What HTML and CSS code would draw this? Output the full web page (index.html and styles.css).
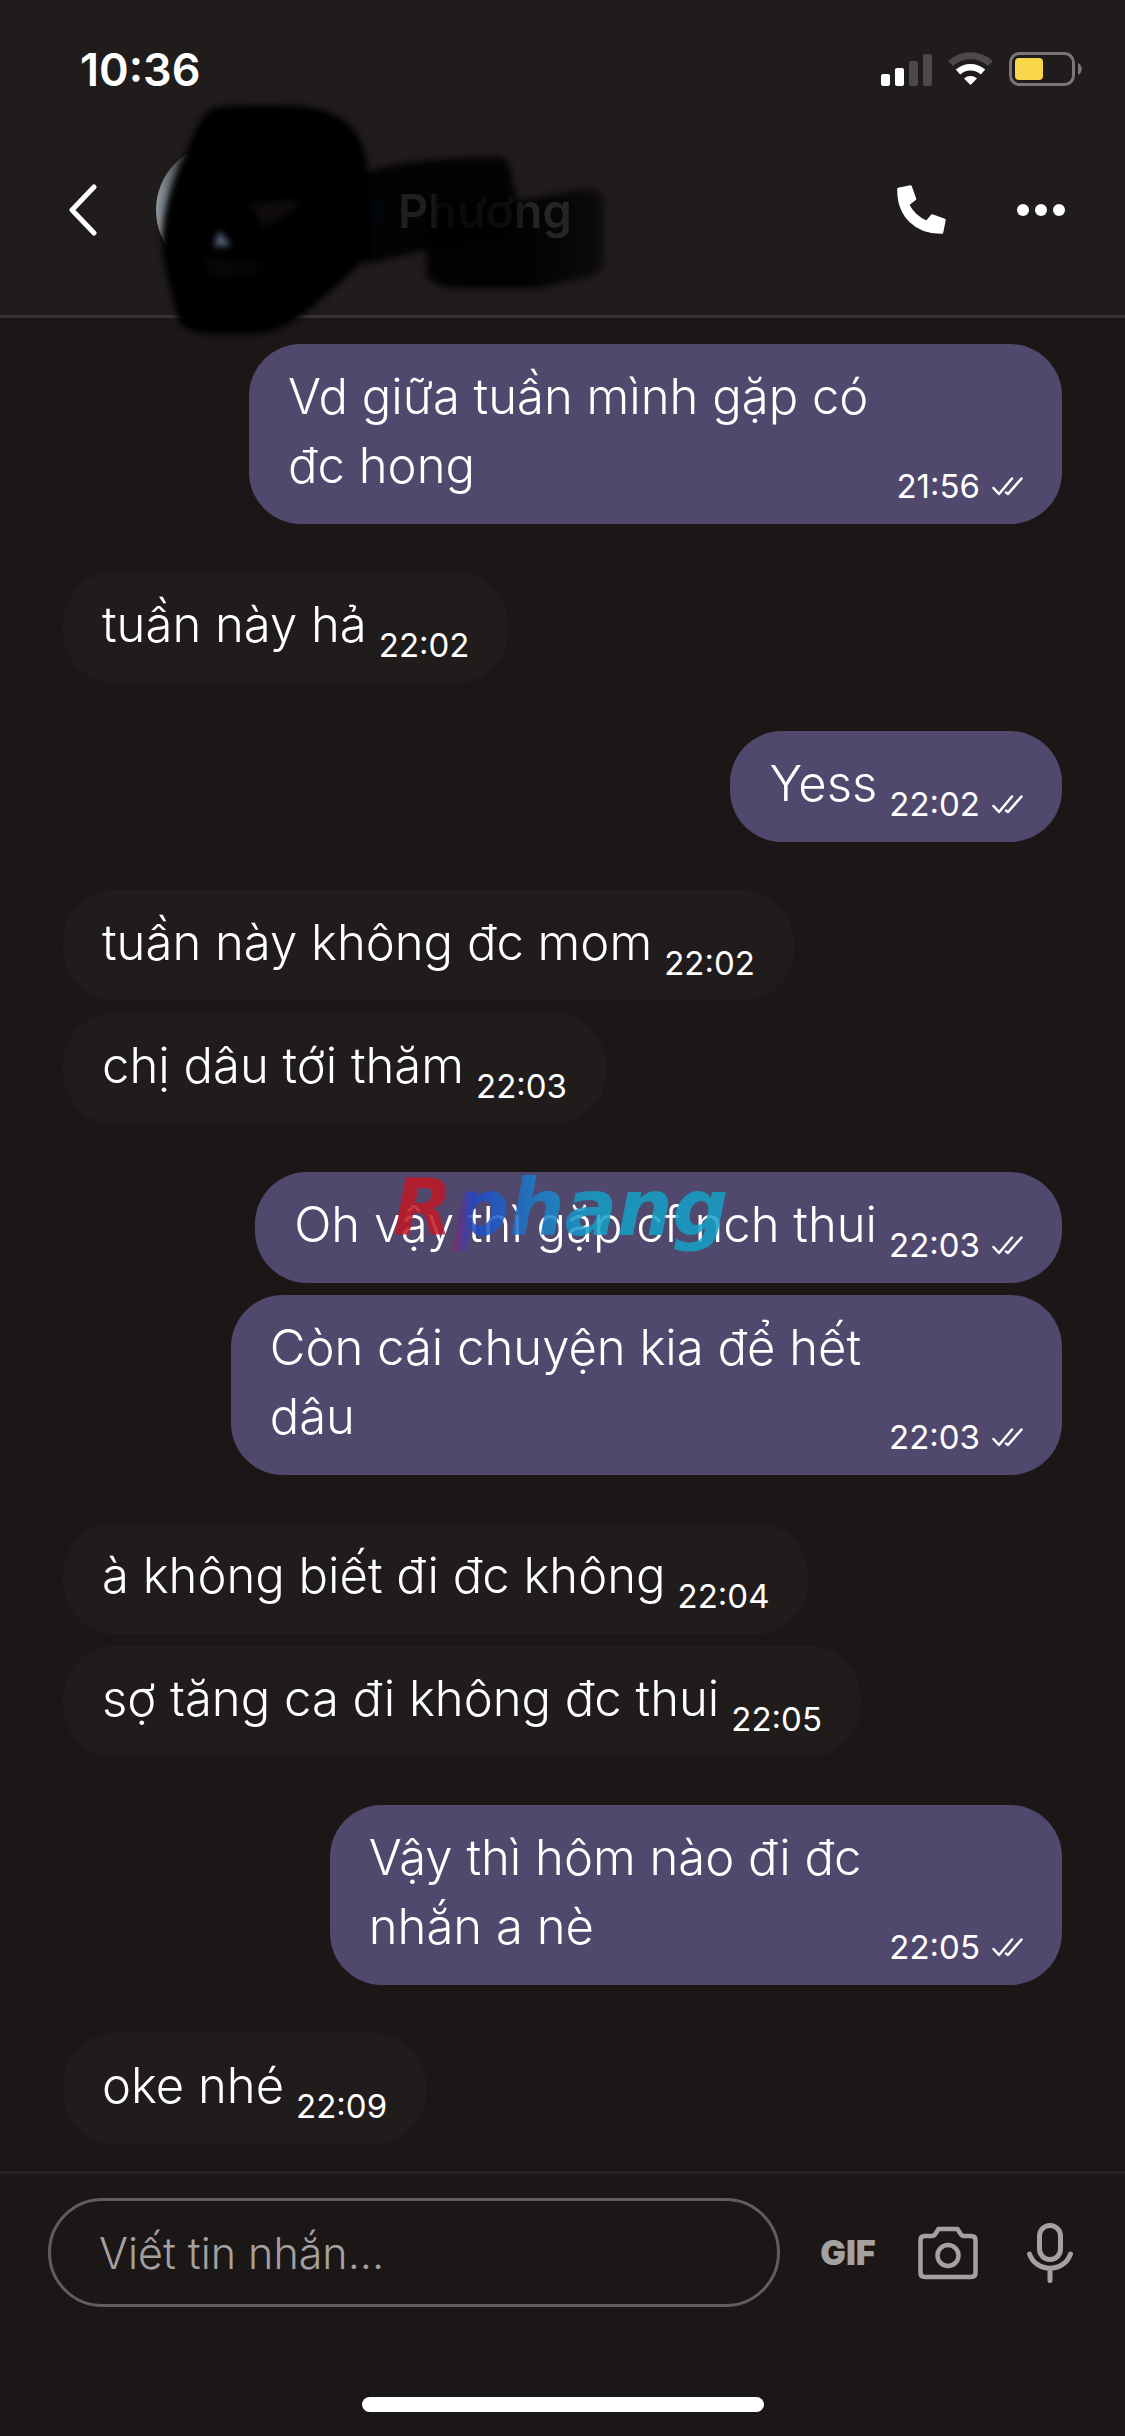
FILE: index.html
```html
<!DOCTYPE html>
<html lang="vi">
<head>
<meta charset="utf-8">
<meta name="viewport" content="width=device-width">
<title>Phương</title>
<link rel="stylesheet" href="styles.css">
</head>
<body>
<svg class="sprite" aria-hidden="true">
  <symbol id="ticks" viewBox="0 0 31 19">
    <path d="M1.500 11L7 17L20 1.500M14 15.500L16 17L29.500 1.500" fill="none" stroke="currentColor" stroke-width="2.500" stroke-linecap="round" stroke-linejoin="round"/>
  </symbol>
</svg>

<header class="top">
  <div class="status">
    <time class="clock">10:36</time>
    <div class="status-icons">
      <svg width="51" height="33" viewBox="0 0 51 33" aria-hidden="true">
        <rect x="0" y="21" width="9" height="12" rx="2" fill="#fff"/>
        <rect x="14" y="15" width="9" height="18" rx="2" fill="#fff"/>
        <rect x="28" y="8" width="9" height="25" rx="2" fill="#4e4949"/>
        <rect x="42" y="1" width="9" height="32" rx="2" fill="#4e4949"/>
      </svg>
      <svg width="45" height="34" viewBox="0 0 45 34" aria-hidden="true">
        <path d="M2.500 11.500A29.500 29.500 0 0 1 42.500 11.500" fill="none" stroke="#4e4949" stroke-width="7"/>
        <path d="M10 20A18.500 18.500 0 0 1 35 20" fill="none" stroke="#fff" stroke-width="6.500"/>
        <path d="M22.500 33L16 26.500A10 10 0 0 1 29 26.500Z" fill="#fff"/>
      </svg>
      <svg width="73" height="34" viewBox="0 0 73 34" aria-hidden="true">
        <rect x="1.500" y="1.500" width="63" height="31" rx="9" fill="none" stroke="#7a7676" stroke-width="3"/>
        <rect x="6" y="6" width="28" height="22" rx="4" fill="#f7d64c"/>
        <path d="M69 11C74 13 74 21 69 23Z" fill="#7a7676"/>
      </svg>
    </div>
  </div>

  <nav class="nav">
    <button class="icon-button" aria-label="Quay lại">
      <svg width="30" height="52" viewBox="0 0 30 52"><path d="M25 3L3 26L25 49" fill="none" stroke="#fff" stroke-width="5" stroke-linecap="round" stroke-linejoin="round"/></svg>
    </button>
    <a class="peer" href="#">
      <span class="avatar"></span>
      <span class="badge"></span>
      <span class="name">Phương</span>
    </a>
    <button class="icon-button" aria-label="Gọi">
      <svg width="49" height="50" viewBox="0 0 49 50"><path d="M1.500 4L13.500 1.500L18 14L11 19.500C15 28 21 33 29.500 37L35 30.500L47.500 35L45 47.500C19 48 1 31 1.500 4Z" fill="#fff" stroke="#fff" stroke-width="2.500" stroke-linejoin="round"/></svg>
    </button>
    <button class="icon-button" aria-label="Thêm">
      <svg width="48" height="12" viewBox="0 0 48 12" fill="#fff"><circle cx="6" cy="6" r="6"/><circle cx="24" cy="6" r="6"/><circle cx="42" cy="6" r="6"/></svg>
    </button>
  </nav>

  <svg class="scribble" width="490" height="260" viewBox="140 90 490 260" aria-hidden="true">
    <defs>
      <filter id="soft" x="-10%" y="-10%" width="120%" height="120%" color-interpolation-filters="sRGB"><feGaussianBlur stdDeviation="3"/></filter>
      <linearGradient id="tail" x1="0" x2="1"><stop offset=".6" stop-color="#000" stop-opacity=".88"/><stop offset="1" stop-color="#000" stop-opacity=".6"/></linearGradient>
    </defs>
    <g filter="url(#soft)">
      <path d="M360 174C400 160 450 157 502 157Q508 158 511 172L520 215L500 242C455 243 420 251 366 265Z" fill="#000" opacity=".87"/>
      <path d="M426 200L520 200C550 196 570 190 590 189Q603 190 603 204V258Q603 274 590 277C560 282 545 289 528 289H460Q426 286 426 272Z" fill="url(#tail)"/>
      <path d="M162 238C164 208 172 180 186 152C198 125 202 107 224 106C250 105 280 105 300 106C345 110 368 134 368 176L372 255C345 275 335 290 305 313C278 333 265 334 230 334C190 334 179 330 176 312C168 275 161 260 162 238Z" fill="#000"/>
      <path d="M214 246L219 231L231 246Z" fill="#56637c"/>
      <path d="M250 203L298 201L298 207Q285 218 262 227Z" fill="#151110" opacity=".7"/>
      <path d="M206 255Q230 262 270 264Q245 282 208 277Z" fill="#080a0c" opacity=".6"/>
    </g>
  </svg>
</header>

<main class="chat">
  <section class="group sent">
    <div class="bubble wrapped"><p class="text">Vd giữa tuần mình gặp có<br>đc hong</p><span class="meta"><time>21:56</time><svg class="ticks"><use href="#ticks"/></svg></span></div>
  </section>
  <section class="group">
    <div class="bubble"><p class="text">tuần này hả</p><span class="meta"><time>22:02</time></span></div>
  </section>
  <section class="group sent">
    <div class="bubble"><p class="text">Yess</p><span class="meta"><time>22:02</time><svg class="ticks"><use href="#ticks"/></svg></span></div>
  </section>
  <section class="group">
    <div class="bubble"><p class="text">tuần này không đc mom</p><span class="meta"><time>22:02</time></span></div>
    <div class="bubble"><p class="text">chị dâu tới thăm</p><span class="meta"><time>22:03</time></span></div>
  </section>
  <section class="group sent">
    <div class="bubble"><p class="text">Oh vậy thì gặp cf nch thui</p><span class="meta"><time>22:03</time><svg class="ticks"><use href="#ticks"/></svg></span></div>
    <div class="bubble wrapped"><p class="text">Còn cái chuyện kia để hết<br>dâu</p><span class="meta"><time>22:03</time><svg class="ticks"><use href="#ticks"/></svg></span></div>
    <span class="watermark">Rphang</span>
  </section>
  <section class="group">
    <div class="bubble"><p class="text">à không biết đi đc không</p><span class="meta"><time>22:04</time></span></div>
    <div class="bubble"><p class="text">sợ tăng ca đi không đc thui</p><span class="meta"><time>22:05</time></span></div>
  </section>
  <section class="group sent">
    <div class="bubble wrapped"><p class="text">Vậy thì hôm nào đi đc<br>nhắn a nè</p><span class="meta"><time>22:05</time><svg class="ticks"><use href="#ticks"/></svg></span></div>
  </section>
  <section class="group">
    <div class="bubble"><p class="text">oke nhé</p><span class="meta"><time>22:09</time></span></div>
  </section>
</main>

<footer class="bottom">
  <form class="composer">
    <input class="field" type="text" placeholder="Viết tin nhắn..." aria-label="Viết tin nhắn">
    <button class="tool gif" type="button">GIF</button>
    <button class="tool" type="button" aria-label="Máy ảnh">
      <svg width="60" height="54" viewBox="0 0 60 54" fill="none" stroke="currentColor" stroke-width="4.500" stroke-linejoin="round"><path d="M6 10H14Q16.500 10 18 7L20.500 3H39.500L42 7Q43.500 10 46 10H53Q57.500 10 57.500 14V47Q57.500 51 53 51H7Q2.500 51 2.500 47V14Q2.500 10 7 10Z"/><circle cx="30" cy="29.500" r="10.500"/></svg>
    </button>
    <button class="tool" type="button" aria-label="Ghi âm">
      <svg width="46" height="60" viewBox="0 0 46 60" fill="none" stroke="currentColor" stroke-width="5" stroke-linecap="round"><rect x="12.500" y="2.500" width="21" height="34" rx="10.500"/><path d="M2.500 31C9 50 37 50 43.500 31M23 46V57.500"/></svg>
    </button>
  </form>
  <div class="home-bar"></div>
</footer>
</body>
</html>
```
FILE: styles.css
```css
* {
  box-sizing: border-box;
}

body {
  margin: 0;
  min-height: 100vh;
  display: flex;
  flex-direction: column;
  background: #1c1717;
  color: #fff;
  font-family: Inter, "Noto Sans", sans-serif;
}

button {
  padding: 0;
  border: 0;
  background: none;
  color: inherit;
  font: inherit;
}

.sprite {
  position: absolute;
  width: 0;
  height: 0;
}

/* Header */
.top {
  position: relative;
  padding-bottom: 33px;
  background: #211c1c;
  border-bottom: 3px solid #383333;
}

.status {
  height: 138px;
  padding: 0 43px 0 80px;
  display: flex;
  align-items: center;
  justify-content: space-between;
}

.clock {
  font-size: 45px;
  font-weight: 600;
}

.status-icons {
  display: flex;
  align-items: center;
  gap: 16px;
}

.nav {
  height: 144px;
  padding: 0 48px;
  display: flex;
  align-items: center;
  gap: 48px;
}

.icon-button {
  width: 72px;
  height: 72px;
  display: flex;
  align-items: center;
  justify-content: center;
}

.peer {
  flex: 1;
  margin-left: -12px;
  display: flex;
  align-items: center;
  color: #252525;
  text-decoration: none;
}

.avatar {
  width: 132px;
  height: 132px;
  border-radius: 50%;
  background: linear-gradient(90deg, #8f979c, #1d2429 30%);
}

.badge {
  width: 36px;
  height: 36px;
  margin: 0 14px 0 60px;
  border-radius: 50%;
  background: #14263c;
}

.name {
  position: relative;
  z-index: 1;
  font-size: 47px;
  font-weight: 600;
  color: transparent;
  background: linear-gradient(90deg, #201e1e 18%, #080808 24%, #0c0c0c 64%, #262525 76%);
  background-clip: text;
}

.scribble {
  position: absolute;
  left: 140px;
  top: 90px;
}

/* Messages */
.chat {
  flex: 1;
  padding: 26px 63px;
  display: flex;
  flex-direction: column;
  gap: 48px;
}

.group {
  position: relative;
  display: flex;
  flex-direction: column;
  align-items: flex-start;
  gap: 12px;
}

.sent {
  align-items: flex-end;
}

.bubble {
  padding: 18px 39px 24px;
  display: flex;
  align-items: flex-end;
  gap: 12px;
  border-radius: 52px;
  background: #211c1c;
}

.sent .bubble {
  background: #50496d;
}

.sent .wrapped {
  gap: 28px;
}

.text {
  margin: 0;
  font-size: 49px;
  font-weight: 300;
  line-height: 69px;
}

.meta {
  display: flex;
  align-items: center;
  gap: 12px;
  font-size: 33px;
  line-height: 28px;
}

.ticks {
  width: 31px;
  height: 19px;
}

.watermark {
  position: absolute;
  left: 330px;
  top: -10px;
  font: italic bold 78px/92px "DejaVu Sans", sans-serif;
  color: transparent;
  background: linear-gradient(90deg, #c01825 14%, #2048c8 24%, #1c7cc8 42%, #16a0c8 60%);
  background-clip: text;
  opacity: .85;
}

/* Composer */
.bottom {
  padding-bottom: 24px;
  border-top: 3px solid #292424;
}

.composer {
  padding: 24px 43px 90px 48px;
  display: flex;
  align-items: center;
  gap: 38px;
  color: #a5a1a1;
}

.field {
  flex: 1;
  min-width: 0;
  height: 109px;
  padding: 0 48px;
  border: 3px solid #625d5d;
  border-radius: 55px;
  background: none;
  color: #fff;
  font: 300 43px Inter, "Noto Sans", sans-serif;
}

.field::placeholder {
  color: #a5a1a1;
  opacity: 1;
}

.tool {
  width: 64px;
  height: 64px;
  display: flex;
  align-items: center;
  justify-content: center;
}

.gif {
  width: 60px;
  font-size: 34px;
  font-weight: 900;
}

.home-bar {
  width: 402px;
  height: 15px;
  margin: 0 auto;
  border-radius: 8px;
  background: #fff;
}
```
